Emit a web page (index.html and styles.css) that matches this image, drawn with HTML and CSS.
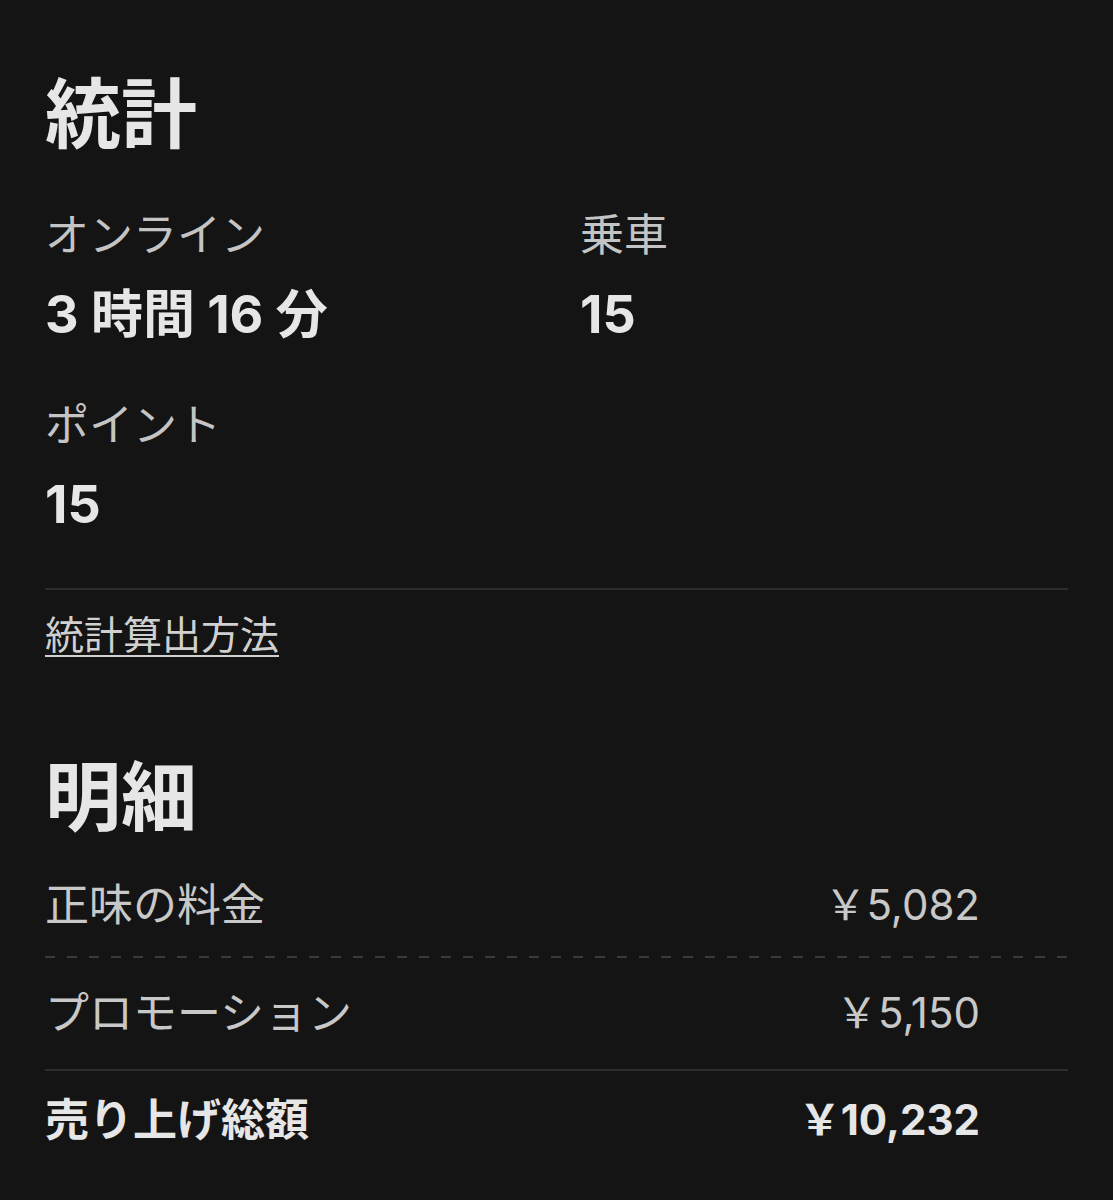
FILE: index.html
```html
<!DOCTYPE html>
<html lang="ja">
<head>
    <meta charset="UTF-8">
    <meta name="viewport" content="width=device-width, initial-scale=1.0">
    <title>統計</title>
    <link rel="stylesheet" href="styles.css">
</head>
<body>
    <h1 class="section-title">統計</h1>

    <!-- Stats grid -->
    <div class="stats">
        <div class="stat">
            <div class="stat-label">オンライン</div>
            <div class="stat-value">3 時間 16 分</div>
        </div>
        <div class="stat">
            <div class="stat-label">乗車</div>
            <div class="stat-value">15</div>
        </div>
        <div class="stat">
            <div class="stat-label">ポイント</div>
            <div class="stat-value">15</div>
        </div>
    </div>

    <hr class="divider">
    <a class="stats-link" href="#">統計算出方法</a>

    <h1 class="section-title breakdown-title">明細</h1>

    <!-- Breakdown rows -->
    <div class="breakdown">
        <div class="row dashed">
            <span class="row-label">正味の料金</span>
            <span class="row-amount">￥5,082</span>
        </div>
        <div class="row solid">
            <span class="row-label">プロモーション</span>
            <span class="row-amount">￥5,150</span>
        </div>
        <div class="row total">
            <span class="row-label">売り上げ総額</span>
            <span class="row-amount">￥10,232</span>
        </div>
    </div>
</body>
</html>
```

FILE: styles.css
```css
body {
    margin: 0;
    padding: 0 45px;
    background: #141414;
    color: #c6c6c6;
    font-family: Inter, "Noto Sans CJK JP", sans-serif;
}

.section-title {
    margin: 68px 0 0;
    font-size: 76px;
    line-height: 92px;
    font-weight: 700;
    color: #e6e6e6;
}

.stats {
    display: grid;
    grid-template-columns: 535px 1fr;
    row-gap: 55px;
    margin-top: 50px;
}

.stat-label {
    font-size: 44px;
    line-height: 50px;
    color: #c4c4c4;
}

.stat-value {
    margin-top: 25px;
    font-size: 52px;
    line-height: 60px;
    font-weight: 700;
    color: #e6e6e6;
}

.divider {
    margin: 53px 0 0;
    border: none;
    height: 2px;
    background: #2e2e2e;
}

.stats-link {
    display: inline-block;
    margin-top: 20px;
    font-size: 39px;
    line-height: 50px;
    color: #d0d0d0;
    text-decoration: underline;
    text-decoration-thickness: 2px;
    text-underline-offset: 6px;
}

.breakdown-title {
    margin-top: 91px;
}

.breakdown {
    margin-top: 9px;
}

.row {
    display: flex;
    justify-content: space-between;
    align-items: center;
    padding: 28px 88px 28px 0;
    font-size: 44px;
    line-height: 50px;
    color: #c8c8c8;
}

.row.dashed {
    background: repeating-linear-gradient(to right, #3a3a3a 0 10px, transparent 10px 22px) bottom / 100% 2px no-repeat;
}

.row.solid {
    padding-top: 30px;
    padding-bottom: 31px;
    border-bottom: 2px solid #2e2e2e;
}

.row.total {
    padding-top: 24px;
    font-weight: 700;
    color: #e6e6e6;
}

.row-amount {
    font-size: 42px;
}
```
